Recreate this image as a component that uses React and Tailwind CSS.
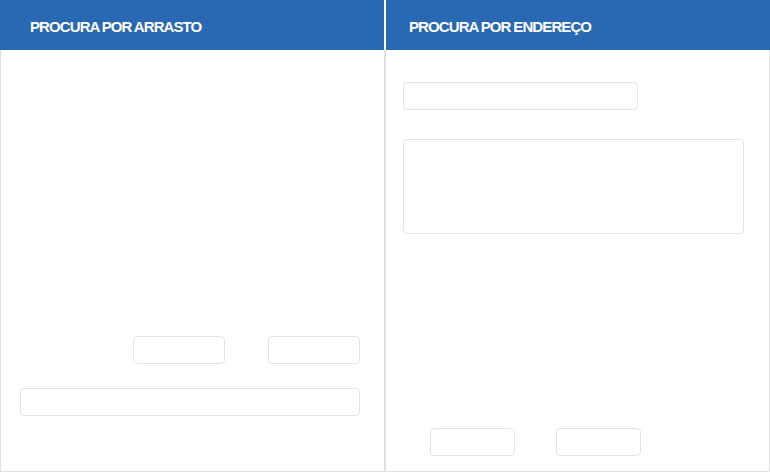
export default function App() {
  const box = "rounded-[4px] border border-[#e2e2e2] bg-white";

  return (
    <div className="flex w-[770px] h-[472px] bg-white font-['Liberation_Sans',Arial,sans-serif]">
      {/* Procura por arrasto */}
      <div className="flex flex-col w-[385px]">
        <div className="h-[50px] mr-[1px] bg-[#2968b2] flex items-center pl-[30px] pt-[4px]">
          <h2 className="text-white text-[15px] font-bold tracking-[-0.9px] [word-spacing:-0.5px]">PROCURA POR ARRASTO</h2>
        </div>
        <div className="flex-1 flex flex-col justify-end border-l border-r border-b border-[#e0e0e0] pl-[19px] pr-[24px] pb-[55px]">
          <div className="flex justify-end gap-[43px]">
            <input className={`${box} w-[92px] h-[28px]`} />
            <input className={`${box} w-[92px] h-[28px]`} />
          </div>
          <input className={`${box} mt-[24px] w-full h-[28px]`} />
        </div>
      </div>

      {/* Procura por endereço */}
      <div className="flex flex-col w-[385px]">
        <div className="h-[50px] ml-[1px] bg-[#2968b2] flex items-center pl-[23px] pt-[4px]">
          <h2 className="text-white text-[15px] font-bold tracking-[-0.9px] [word-spacing:-0.5px]">PROCURA POR ENDEREÇO</h2>
        </div>
        <div className="flex-1 flex flex-col border border-t-0 border-[#e0e0e0] pt-[32px] pl-[17px] pb-[15px]">
          <input className={`${box} w-[235px] h-[28px]`} />
          <textarea className={`${box} mt-[29px] w-[341px] h-[95px] resize-none`} />
          <div className="mt-auto flex gap-[41px] pl-[27px]">
            <button className={`${box} w-[85px] h-[28px]`} />
            <button className={`${box} w-[85px] h-[28px]`} />
          </div>
        </div>
      </div>
    </div>
  );
}
